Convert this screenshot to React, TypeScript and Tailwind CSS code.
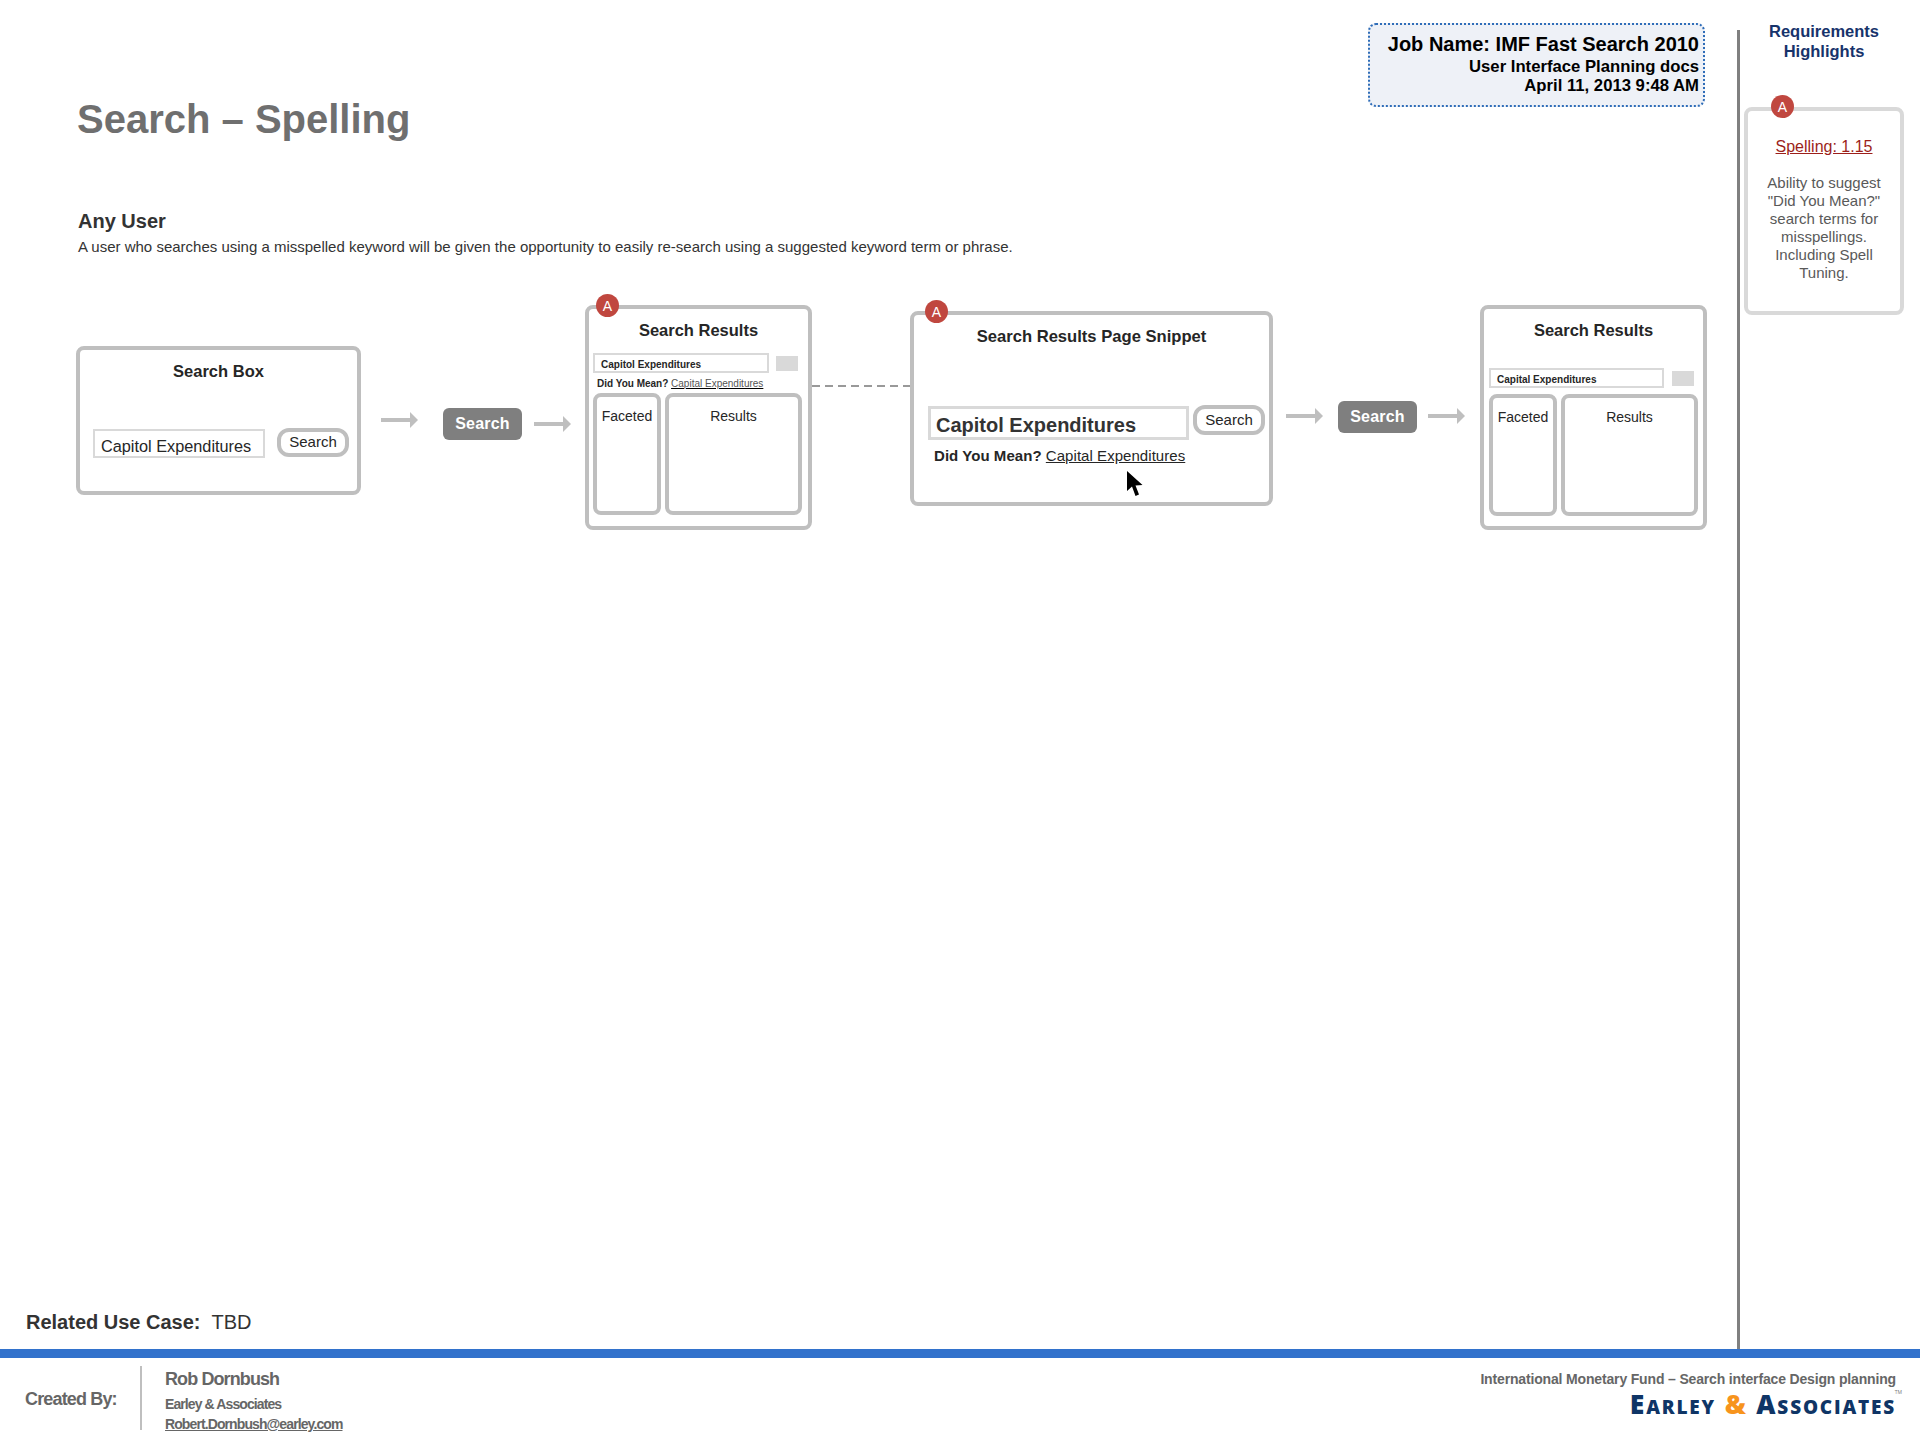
const Badge = ({ className }: { className: string }) => (
  <div
    className={`absolute flex h-[23px] w-[23px] items-center justify-center rounded-full bg-[#c0473f] text-[14px] leading-none text-white ${className}`}
  >
    A
  </div>
)

const Arrow = ({ className }: { className: string }) => (
  <svg className={`absolute ${className}`} width="38" height="16" viewBox="0 0 38 16">
    <rect x="0" y="6" width="30" height="4" fill="#bfbfbf" />
    <path d="M29 0 L37 8 L29 16 Z" fill="#bfbfbf" />
  </svg>
)

const SearchPill = ({ className }: { className: string }) => (
  <div
    className={`absolute flex h-[32px] w-[79px] items-center justify-center rounded-[6px] bg-[#7f7f7f] text-[16px] font-bold tracking-[0.2px] text-white ${className}`}
  >
    Search
  </div>
)

const Panes = () => (
  <div className="flex gap-[4px]">
    <div className="h-[122px] w-[68px] rounded-[8px] border-[4px] border-[#bfbfbf] pt-[11px] text-center text-[14px] leading-[16px] text-[#262626]">
      Faceted
    </div>
    <div className="h-[122px] w-[137px] rounded-[8px] border-[4px] border-[#bfbfbf] pt-[11px] text-center text-[14px] leading-[16px] text-[#262626]">
      Results
    </div>
  </div>
)

const nodeClass = 'absolute rounded-[8px] border-[4px] border-[#bfbfbf] bg-white'

const Diagram = () => (
  <div className="relative mt-[43px] h-[240px] w-full">
    {/* canvas starts at x 0, y 301 */}
    <div className={`${nodeClass} top-[46px] left-[76px] h-[149px] w-[285px] pl-[13px]`}>
      <div className="mt-[12px] pr-[13px] text-center text-[16.5px] leading-[18px] font-bold text-[#262626]">
        Search Box
      </div>
      <div className="mt-[49px] flex items-start gap-[12px]">
        <div className="flex h-[29px] w-[172px] items-end border-[2px] border-[#d9d9d9] px-[6px] pb-[1px] text-[16.3px] leading-[18px] text-[#262626]">
          Capitol Expenditures
        </div>
        <div className="-mt-[1px] flex h-[29px] w-[72px] items-center justify-center rounded-[12px] border-[4px] border-[#bfbfbf] text-[15px] text-[#262626]">
          Search
        </div>
      </div>
    </div>

    <Arrow className="top-[112px] left-[381px]" />
    <SearchPill className="top-[108px] left-[443px]" />
    <Arrow className="top-[116px] left-[534px]" />

    <div className={`${nodeClass} top-[5px] left-[585px] h-[225px] w-[227px] pl-[4px]`}>
      <div className="mt-[12px] pr-[4px] text-center text-[16.5px] leading-[18px] font-bold text-[#262626]">
        Search Results
      </div>
      <div className="mt-[14px] flex items-center gap-[7px]">
        <div className="flex h-[20px] w-[176px] items-end border-[2px] border-[#d9d9d9] px-[6px] text-[10px] leading-[13px] font-bold text-[#262626]">
          Capitol Expenditures
        </div>
        <div className="h-[15px] w-[22px] bg-[#d9d9d9]" />
      </div>
      <div className="mt-[2px] ml-[4px] h-[18px] text-[10px] leading-[18px] text-[#262626]">
        <span className="font-bold">Did You Mean? </span>
        <span className="text-[#555] underline decoration-black">Capital Expenditures</span>
      </div>
      <Panes />
    </div>
    <Badge className="-top-[6px] left-[596px]" />

    <div className="absolute top-[85px] left-[812px] h-[2px] w-[98px] bg-[repeating-linear-gradient(90deg,#999_0_8px,transparent_8px_13px)]" />

    <div className={`${nodeClass} top-[11px] left-[910px] h-[195px] w-[363px] pl-[14px]`}>
      <div className="mt-[13px] pr-[14px] text-center text-[16.6px] leading-[18px] font-bold text-[#262626]">
        Search Results Page Snippet
      </div>
      <div className="mt-[60px] flex items-start gap-[4px]">
        <div className="flex h-[34px] w-[261px] items-end border-[3px] border-[#d9d9d9] px-[5px] text-[20px] leading-[24px] font-bold text-[#333]">
          Capitol Expenditures
        </div>
        <div className="-mt-[1px] flex h-[30px] w-[72px] items-center justify-center rounded-[12px] border-[4px] border-[#bfbfbf] text-[15px] text-[#262626]">
          Search
        </div>
      </div>
      <div className="mt-[7px] ml-[6px] text-[15px] leading-[18px] tracking-[0.05px] text-[#262626]">
        <span className="font-bold">Did You Mean? </span>
        <span className="underline">Capital Expenditures</span>
      </div>
    </div>
    <Badge className="top-[0px] left-[925px]" />
    <svg className="absolute top-[171px] left-[1127px]" width="17" height="26" viewBox="0 0 17 26">
      <path d="M0 0 L0 20 L5 15.5 L8.5 25 L12 23.5 L8.5 14.5 L15.5 14 Z" fill="#000" />
    </svg>

    <Arrow className="top-[108px] left-[1286px]" />
    <SearchPill className="top-[101px] left-[1338px]" />
    <Arrow className="top-[108px] left-[1428px]" />

    <div className={`${nodeClass} top-[5px] left-[1480px] h-[225px] w-[227px] pl-[5px]`}>
      <div className="mt-[12px] pr-[5px] text-center text-[16.5px] leading-[18px] font-bold text-[#262626]">
        Search Results
      </div>
      <div className="mt-[29px] mb-[6px] flex items-center gap-[8px]">
        <div className="flex h-[20px] w-[175px] items-end border-[2px] border-[#d9d9d9] px-[6px] text-[10px] leading-[13px] font-bold text-[#262626]">
          Capital Expenditures
        </div>
        <div className="h-[15px] w-[22px] bg-[#d9d9d9]" />
      </div>
      <Panes />
    </div>
  </div>
)

const Sidebar = () => (
  <div className="relative mt-[30px] w-[183px] border-l-[3px] border-[#808080]">
    <div className="-mt-[8px] pr-[12px] text-center text-[16.5px] leading-[19.5px] font-bold text-[#17336b]">
      Requirements
      <br />
      Highlights
    </div>
    <div className="mt-[46px] ml-[4px] h-[208px] w-[160px] rounded-[8px] border-[4px] border-[#d9d9d9] px-[10px] pt-[26px] text-center">
      <div className="text-[16px] leading-[20px] text-[#9c1f1a] underline">Spelling: 1.15</div>
      <div className="mt-[17px] text-[15px] leading-[18px] text-[#595959]">
        Ability to suggest "Did You Mean?" search terms for misspellings. Including Spell Tuning.
      </div>
    </div>
    <Badge className="top-[65px] left-[31px]" />
  </div>
)

const Footer = () => (
  <div className="flex h-[82px] border-t-[9px] border-[#3272cc] text-[#666]">
    <div className="flex w-[140px] items-center pt-[9px] pl-[25px] text-[18px] font-bold tracking-[-0.85px]">
      Created By:
    </div>
    <div className="mt-[8px] h-[64px] border-l-[2px] border-[#bfbfbf] pl-[23px]">
      <div className="mt-[2px] text-[18px] leading-[22px] font-bold tracking-[-0.9px]">
        Rob Dornbush
      </div>
      <div className="mt-[5px] text-[14px] leading-[18px] font-bold tracking-[-0.9px]">
        Earley &amp; Associates
      </div>
      <div className="mt-[3px] text-[14px] leading-[17px] font-bold tracking-[-0.9px] underline">
        Robert.Dornbush@earley.com
      </div>
    </div>
    <div className="ml-auto pt-[11px] pr-[24px] text-right">
      <div className="text-[14px] leading-[20px] font-bold tracking-[-0.16px]">
        International Monetary Fund – Search interface Design planning
      </div>
      <div className="relative mt-0 flex justify-end font-['Open_Sans',sans-serif] text-[26.5px] leading-[30px] font-extrabold tracking-[1.8px] text-[#0f3566] [font-variant:small-caps]">
        Earley&nbsp;<span className="text-[#f7941d]">&amp;</span>&nbsp;Associates
        <span className="absolute top-[-1px] -right-[6px] text-[5px] leading-[8px] font-normal tracking-normal text-[#777]">
          TM
        </span>
      </div>
    </div>
  </div>
)

const App = () => {
  return (
    <div className="flex h-[1440px] w-[1920px] flex-col bg-white font-['Liberation_Sans',Arial,sans-serif]">
      <div className="flex h-[1349px]">
        <div className="flex w-[1737px] flex-col">
          <div className="flex items-start justify-between pt-[23px] pr-[32px] pl-[77px]">
            <h1 className="mt-[72px] text-[40px] leading-[48px] font-bold text-[#6f6f6f]">
              Search – Spelling
            </h1>
            <div className="h-[84px] w-[337px] rounded-[8px] border-[2px] border-dotted border-[#2f6db8] bg-[#eef1f7] pt-[6px] pr-[4px] text-right font-bold text-black">
              <div className="text-[20px] leading-[27px]">Job Name: IMF Fast Search 2010</div>
              <div className="text-[16.7px] leading-[18px]">User Interface Planning docs</div>
              <div className="text-[16.7px] leading-[20px]">April 11, 2013 9:48 AM</div>
            </div>
          </div>
          <div className="mt-[66px] pl-[78px]">
            <div className="text-[20px] leading-[24px] font-bold text-[#333]">Any User</div>
            <div className="mt-[4px] text-[15px] leading-[20px] text-[#333]">
              A user who searches using a misspelled keyword will be given the opportunity to easily
              re-search using a suggested keyword term or phrase.
            </div>
          </div>
          <Diagram />
          <div className="mt-auto pb-[15px] pl-[26px] text-[20px] leading-[24px] text-[#333]">
            <span className="font-bold">Related Use Case:</span>
            <span className="ml-[11px]">TBD</span>
          </div>
        </div>
        <Sidebar />
      </div>
      <Footer />
    </div>
  )
}

export default App
